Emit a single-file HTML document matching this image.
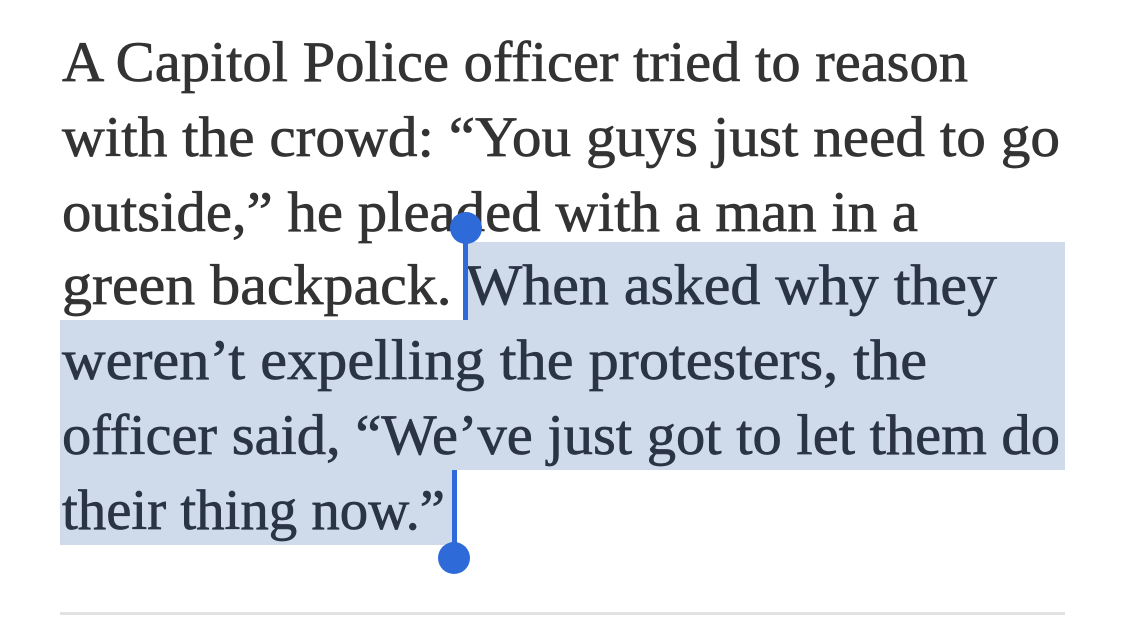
<!DOCTYPE html>
<html><head><meta charset="utf-8"><style>
html,body{margin:0;padding:0;background:#fff;width:1125px;height:620px;overflow:hidden}
svg text{font-family:"Liberation Serif",serif;font-size:57px;fill:#333;stroke:#333;stroke-width:0.7px}
</style></head><body>
<svg width="1125" height="620" xmlns="http://www.w3.org/2000/svg">
<g fill="#cfdbea">
<rect x="468" y="242" width="597" height="78"/>
<rect x="60" y="320" width="1005" height="75"/>
<rect x="60" y="395" width="1005" height="75"/>
<rect x="60" y="470" width="395" height="75"/>
</g>
<text x="62" y="81" textLength="906" lengthAdjust="spacingAndGlyphs">A Capitol Police officer tried to reason</text>
<text x="62" y="156" textLength="998" lengthAdjust="spacingAndGlyphs">with the crowd: “You guys just need to go</text>
<text x="62" y="231" textLength="856" lengthAdjust="spacingAndGlyphs">outside,” he pleaded with a man in a</text>
<text x="62" y="304" textLength="935" lengthAdjust="spacingAndGlyphs">green backpack. <tspan style="fill:#2b3445;stroke:#2b3445">When asked why they</tspan></text>
<text x="62" y="379" textLength="865" lengthAdjust="spacingAndGlyphs" style="fill:#2b3445;stroke:#2b3445">weren’t expelling the protesters, the</text>
<text x="62" y="454" textLength="998" lengthAdjust="spacingAndGlyphs" style="fill:#2b3445;stroke:#2b3445">officer said, “We’ve just got to let them do</text>
<text x="62" y="529" textLength="383" lengthAdjust="spacingAndGlyphs" style="fill:#2b3445;stroke:#2b3445">their thing now.”</text>
<g fill="#2f6bd8">
<rect x="463" y="228" width="5" height="92"/>
<circle cx="466" cy="228" r="16"/>
<rect x="452" y="470" width="5" height="88"/>
<circle cx="454" cy="558" r="16"/>
</g>
<rect x="60" y="612" width="1005" height="3" fill="#e2e2e2"/>
</svg>
</body></html>
